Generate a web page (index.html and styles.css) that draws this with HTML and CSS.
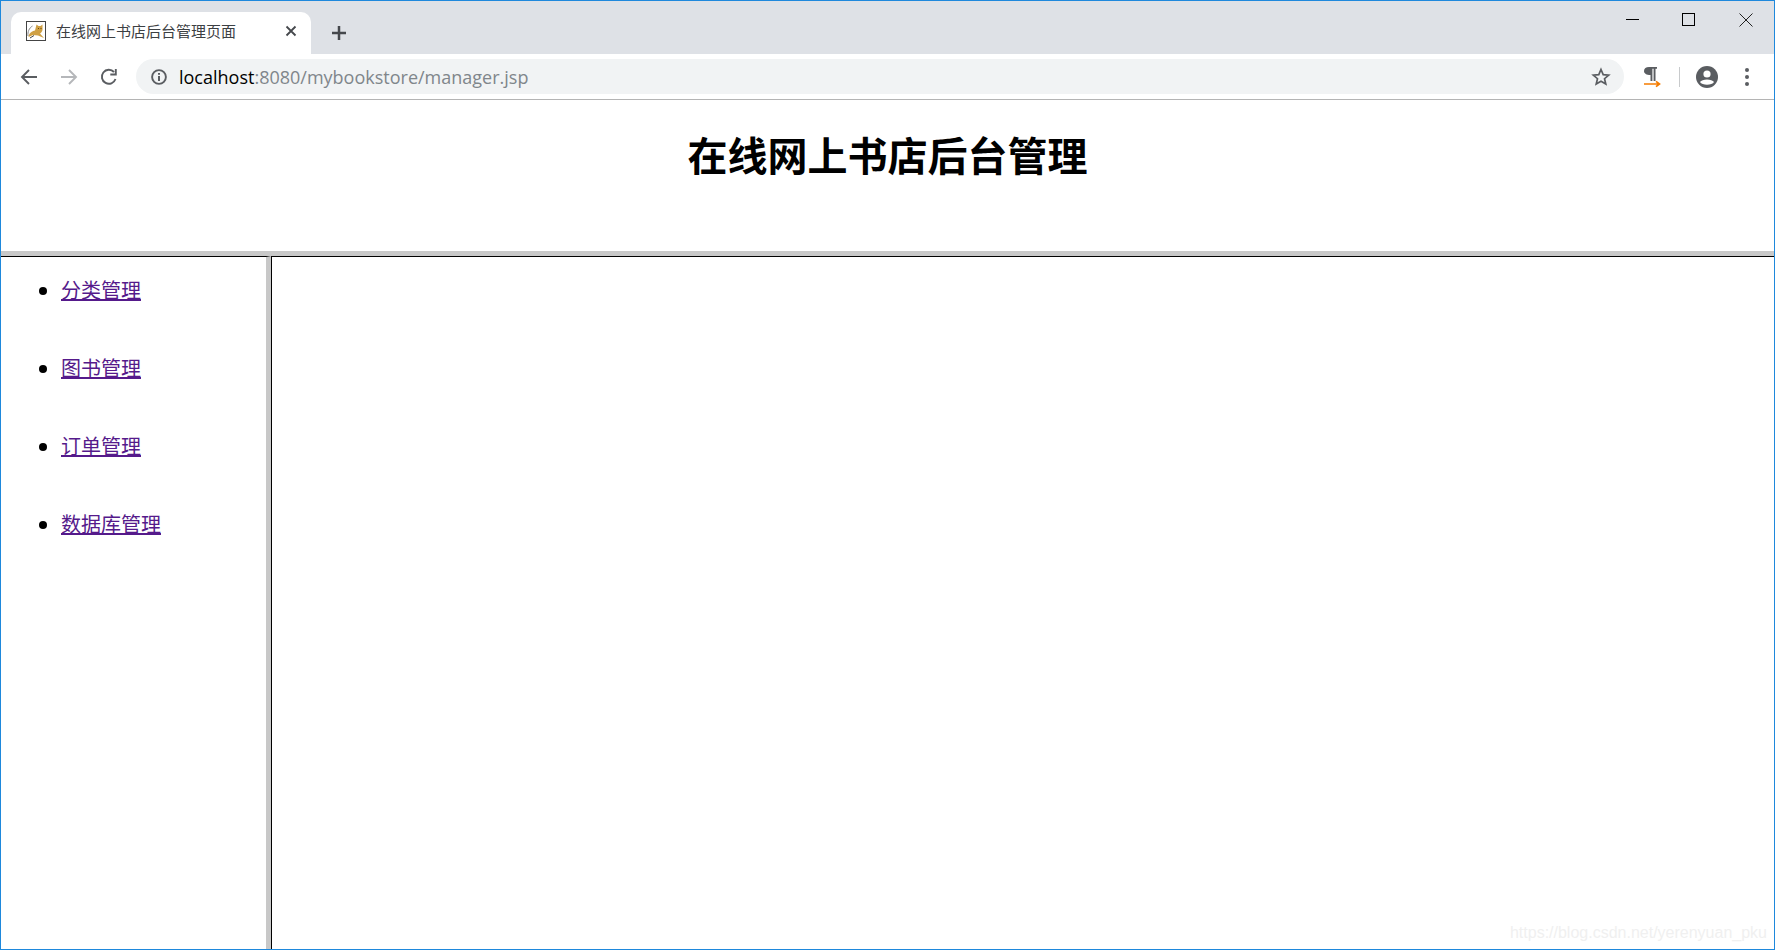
FILE: index.html
```html
<!DOCTYPE html>
<html lang="zh-CN">
<head>
  <meta charset="UTF-8" />
  <title>在线网上书店后台管理页面</title>
  <link rel="stylesheet" href="styles.css">
</head>
<body>
  <div class="window">
    <div class="tabstrip">
      <div class="tab">
        <svg class="favicon" width="20" height="20" viewBox="0 0 20 20">
          <rect x="0.5" y="0.5" width="19" height="19" fill="#fff" stroke="#444"/>
          <path d="M2.500 16 C3 12 6 10 9 9.500 L10.500 3.500 L12.500 5 L14.500 5 L16.500 3.500 L16.500 9 C16 11 15 12 14 12.500 L18 17 L12 14.500 L7 14 Z" fill="#cfa044"/>
          <path d="M2 15 C1.500 11 3 7 6.500 5" fill="none" stroke="#8a8a8a" stroke-width="1"/>
          <path d="M4 17 L8 14.500" stroke="#444" stroke-width="1"/>
          <path d="M12 7.500 H13 M14.500 7.500 H15.500" stroke="#6b4a12" stroke-width="1"/>
        </svg>
        <span class="tab-title">在线网上书店后台管理页面</span>
        <svg class="tab-close" width="12" height="12" viewBox="0 0 12 12">
          <path d="M1.500 1.500 L10.500 10.500 M10.500 1.500 L1.500 10.500" stroke="#45484c" stroke-width="1.800"/>
        </svg>
      </div>
      <svg class="new-tab" width="16" height="16" viewBox="0 0 16 16">
        <path d="M8 1 V15 M1 8 H15" stroke="#45484c" stroke-width="2.500"/>
      </svg>
      <div class="win-controls">
        <svg width="14" height="14" viewBox="0 0 14 14"><path d="M0 6.500 H13" stroke="#000" stroke-width="1"/></svg>
        <svg width="14" height="14" viewBox="0 0 14 14"><rect x="0.500" y="0.500" width="12" height="12" fill="none" stroke="#000"/></svg>
        <svg width="14" height="14" viewBox="0 0 14 14"><path d="M0.500 0.500 L13.500 13.500 M13.500 0.500 L0.500 13.500" stroke="#222" stroke-width="1"/></svg>
      </div>
    </div>

    <div class="toolbar">
      <svg class="nav-btn" width="18" height="18" viewBox="0 0 18 18"><path d="M17 9 H2 M9 2 L2 9 L9 16" fill="none" stroke="#5a5d61" stroke-width="1.900"/></svg>
      <svg class="nav-btn" width="18" height="18" viewBox="0 0 18 18"><path d="M1 9 H16 M9 2 L16 9 L9 16" fill="none" stroke="#b5b7ba" stroke-width="1.900"/></svg>
      <svg class="nav-btn" width="18" height="18" viewBox="0 0 18 18"><path d="M15.500 11 A7 7 0 1 1 14 4 M15.800 1 V6.500 H10.300" fill="none" stroke="#5a5d61" stroke-width="1.900"/></svg>
      <div class="omnibox">
        <svg width="16" height="16" viewBox="0 0 16 16">
          <circle cx="8" cy="8" r="6.900" fill="none" stroke="#5a5d61" stroke-width="1.900"/>
          <path d="M8 7 V12 M8 4 V5.800" stroke="#5a5d61" stroke-width="2"/>
        </svg>
        <div class="url"><span class="host">localhost</span>:8080/mybookstore/manager.jsp</div>
        <svg class="star" width="20" height="20" viewBox="0 0 20 20">
          <path d="M10 2.500 L12.200 7.600 L17.700 8.100 L13.500 11.700 L14.800 17.100 L10 14.300 L5.200 17.100 L6.500 11.700 L2.300 8.100 L7.800 7.600 Z" fill="none" stroke="#5a5d61" stroke-width="1.700"/>
        </svg>
      </div>
      <svg class="ext" width="18" height="22" viewBox="0 0 18 22">
        <path d="M6 1 H14 V2.800 H12.500 V15 H10.600 V2.800 H9.400 V15 H7.500 V9 C3.500 9 1 7.500 1 5 C1 2.500 3 1 6 1 Z" fill="#5a5d61"/>
        <path d="M1 18 H16 M13 15.300 L16.500 18 L13 20.700" fill="none" stroke="#f57c00" stroke-width="1.700"/>
      </svg>
      <div class="divider"></div>
      <svg class="avatar" width="22" height="22" viewBox="0 0 22 22">
        <circle cx="11" cy="11" r="11" fill="#5a5d61"/>
        <circle cx="11" cy="8" r="3.600" fill="#fff"/>
        <path d="M4 16 C6 12.600 16 12.600 18 16 C16 19.500 6 19.500 4 16 Z" fill="#fff"/>
      </svg>
      <div class="menu-dots"><i></i><i></i><i></i></div>
    </div>

    <div class="top-frame">
      <h1>在线网上书店后台管理</h1>
    </div>

    <div class="frames">
      <div class="left-frame">
        <ul>
          <li><a href="#">分类管理</a></li>
          <li><a href="#">图书管理</a></li>
          <li><a href="#">订单管理</a></li>
          <li><a href="#">数据库管理</a></li>
        </ul>
      </div>
      <div class="main-frame">
        <div class="watermark">https://blog.csdn.net/yerenyuan_pku</div>
      </div>
    </div>
  </div>
</body>
</html>
```

FILE: styles.css
```css
html, body {
  height: 100%;
}
body {
  margin: 0;
  font-family: "Noto Sans CJK SC", "Liberation Sans", sans-serif;
  background-color: #fff;
  overflow: hidden;
}
.window {
  box-sizing: border-box;
  height: 950px;
  display: flex;
  flex-direction: column;
  border: 1px solid #1e88dc;
}

/* tab strip */
.tabstrip {
  height: 53px;
  flex: none;
  display: flex;
  align-items: flex-end;
  background-color: #dee1e6;
}
.tab {
  box-sizing: border-box;
  width: 300px;
  height: 42px;
  margin-left: 10px;
  padding: 0 14px 4px 15px;
  display: flex;
  align-items: center;
  background-color: #fff;
  border-radius: 10px 10px 0 0;
}
.favicon {
  flex: none;
}
.tab-title {
  margin-left: 10px;
  flex: 1;
  font-size: 15px;
  line-height: 20px;
  color: #3c4043;
  white-space: nowrap;
}
.new-tab {
  margin: 0 0 13px 20px;
}
.win-controls {
  margin-left: auto;
  align-self: flex-start;
  display: flex;
  gap: 43px;
  padding: 12px 21px 0 0;
}
.win-controls svg:first-child {
  margin-right: -1px;
}

/* toolbar */
.toolbar {
  height: 45px;
  flex: none;
  display: flex;
  align-items: center;
  padding-left: 19px;
  background-color: #fff;
  border-bottom: 1px solid #b4b4b4;
}
.nav-btn {
  flex: none;
  margin-right: 22px;
}
.nav-btn:nth-child(3) {
  margin-right: 18px;
}
.omnibox {
  box-sizing: border-box;
  width: 1488px;
  height: 35px;
  flex: none;
  display: flex;
  align-items: center;
  padding: 0 13px 0 15px;
  background-color: #f1f3f4;
  border-radius: 18px;
}
.url {
  margin-left: 12px;
  flex: 1;
  font-family: "Open Sans", "Liberation Sans", sans-serif;
  font-size: 18px;
  color: #80868b;
  white-space: nowrap;
}
.host {
  color: #000;
}
.ext {
  margin-left: 19px;
  flex: none;
}
.divider {
  width: 1px;
  height: 20px;
  margin-left: 18px;
  flex: none;
  background-color: #c8cacc;
}
.avatar {
  margin-left: 16px;
  flex: none;
}
.menu-dots {
  margin-left: 27px;
  display: flex;
  flex-direction: column;
  gap: 3px;
}
.menu-dots i {
  display: block;
  width: 4px;
  height: 4px;
  border-radius: 50%;
  background-color: #5a5d61;
}

/* frames */
.top-frame {
  height: 151px;
  flex: none;
  background-color: #fff;
}
h1 {
  margin: 0;
  padding-top: 28px;
  font-size: 40px;
  line-height: 52px;
  font-weight: bold;
  text-align: center;
  color: #000;
}
.frames {
  flex: 1;
  min-height: 0;
  display: flex;
  border-top: 5px solid #c8c8c8;
}
.left-frame {
  width: 265px;
  flex: none;
  border-top: 1px solid #000;
  border-right: 5px solid #c8c8c8;
}
.main-frame {
  position: relative;
  flex: 1;
  border-top: 1px solid #000;
  border-left: 1px solid #000;
}
ul {
  margin: 0;
  padding: 17px 0 0 60px;
}
li {
  height: 78px;
  font-size: 20px;
  line-height: 32px;
}
li a {
  color: #551a8b;
}
.watermark {
  position: absolute;
  right: 7px;
  bottom: 7px;
  font-family: "Liberation Sans", sans-serif;
  font-size: 16px;
  color: #f0f0f0;
}
```
